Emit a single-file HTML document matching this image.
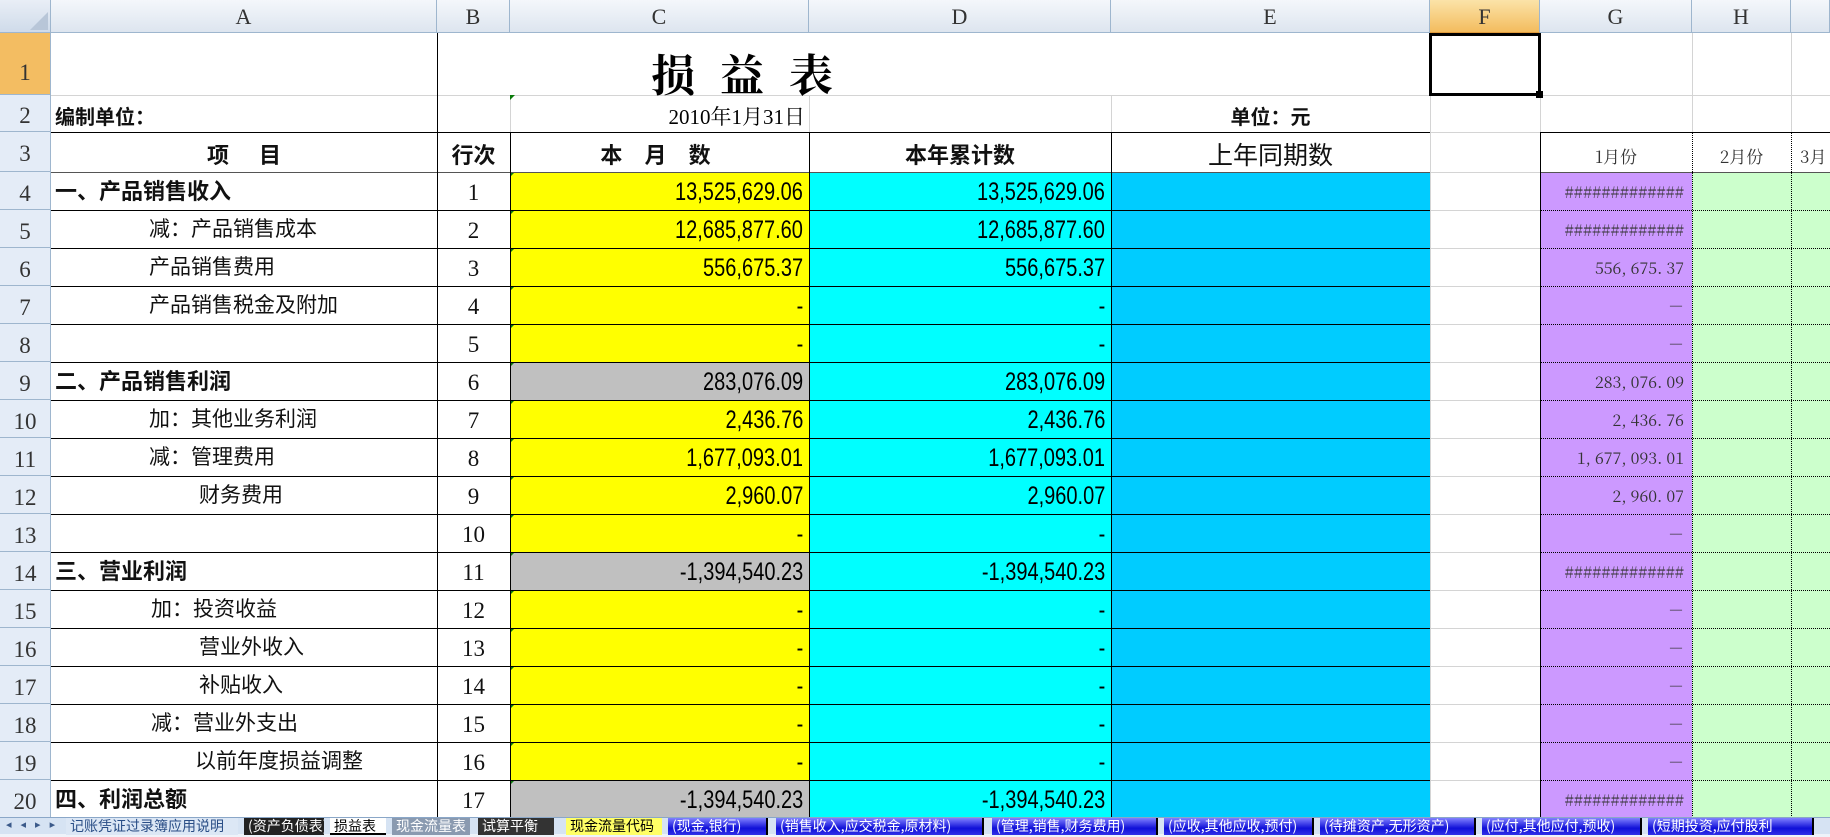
<!DOCTYPE html>
<html><head><meta charset="utf-8"><style>
*{margin:0;padding:0;box-sizing:border-box}
body{width:1830px;height:837px;overflow:hidden;background:#fff;position:relative;font-family:"Liberation Sans","Noto Sans CJK SC",sans-serif}
.a{position:absolute}
.ch{position:absolute;top:0;height:33px;background:linear-gradient(#f4f7fb,#dde5ef);border-right:1px solid #9eb6ce;border-bottom:1px solid #9eb6ce;color:#333;font:22px "Liberation Serif","Noto Serif CJK SC",serif;text-align:center;line-height:33px;transform-origin:center}
.rh{position:absolute;left:0;width:51px;background:#e4ecf7;border-bottom:1px solid #9eb6ce;border-right:1px solid #9eb6ce;color:#333;font-family:"Liberation Serif",serif;font-size:23px;text-align:center}
.c{position:absolute;height:38px;line-height:40px;white-space:nowrap;overflow:hidden}
.t{font-family:"Liberation Sans","Noto Sans CJK SC",sans-serif;font-size:20px;color:#111}
.b{font-weight:bold;font-size:21px}
.n{font-family:"Liberation Sans",sans-serif;font-size:25px;text-align:right;padding-right:6px;color:#000}
.n span{display:inline-block;transform:scaleX(.8);transform-origin:right}
.g{font-family:"Noto Serif CJK SC","Liberation Serif",serif;font-size:16px;color:#333;text-align:right;padding-right:8px}
.num{font-family:"Liberation Serif",serif;font-size:23px;text-align:center;color:#111}
.tab{position:absolute;top:818px;height:17px;font-family:"Noto Sans CJK SC",sans-serif;font-size:14px;line-height:17px;white-space:nowrap;overflow:hidden;padding:0 4px}
.bl{color:#fff;background:linear-gradient(#8080ff,#1010d8 60%,#3030e8);border-right:2px solid #000}
</style></head><body>
<div class="a" style="left:0;top:0;width:51px;height:33px;background:linear-gradient(#e9eef6,#cfdbea);border-right:1px solid #9eb6ce;border-bottom:1px solid #9eb6ce"></div>
<svg class="a" style="left:30px;top:12px" width="18" height="18"><polygon points="18,0 18,18 0,18" fill="#b8c6d8"/></svg>
<div class="ch" style="left:51px;width:386px">A</div>
<div class="ch" style="left:437px;width:73px">B</div>
<div class="ch" style="left:510px;width:299px">C</div>
<div class="ch" style="left:809px;width:302px">D</div>
<div class="ch" style="left:1111px;width:319px">E</div>
<div class="ch" style="left:1430px;width:110px;background:linear-gradient(#fbe3a8,#f3bc5e);border-bottom-color:#e09b3c">F</div>
<div class="ch" style="left:1540px;width:152px">G</div>
<div class="ch" style="left:1692px;width:99px">H</div>
<div class="ch" style="left:1791px;width:39px"></div>
<div class="rh" style="top:33px;height:62px;line-height:80px;background:#f3bd62">1</div>
<div class="rh" style="top:95px;height:37px;line-height:42px">2</div>
<div class="rh" style="top:132px;height:40px;line-height:44px">3</div>

<div class="a" style="left:51px;top:95px;width:1779px;height:1px;background:#d4d4d4"></div>
<div class="a" style="left:51px;top:132px;width:1779px;height:1px;background:#d4d4d4"></div>
<div class="a" style="left:437px;top:33px;width:1px;height:99px;background:#000"></div>
<div class="a" style="left:510px;top:95px;width:1px;height:37px;background:#d4d4d4"></div>
<div class="a" style="left:809px;top:95px;width:1px;height:37px;background:#d4d4d4"></div>
<div class="a" style="left:1111px;top:95px;width:1px;height:37px;background:#d4d4d4"></div>
<div class="a" style="left:1430px;top:33px;width:1px;height:785px;background:#d4d4d4"></div>
<div class="a" style="left:1540px;top:33px;width:1px;height:99px;background:#d4d4d4"></div>
<div class="a" style="left:1692px;top:33px;width:1px;height:99px;background:#d4d4d4"></div>
<div class="a" style="left:1791px;top:33px;width:1px;height:99px;background:#d4d4d4"></div>

<div class="a" style="left:562px;top:40px;width:360px;text-align:center;font-family:'Noto Serif CJK SC',serif;font-weight:bold;font-size:44px;letter-spacing:25px;color:#000;padding-left:25px">损益表</div>
<div class="a" style="left:1429px;top:33px;width:112px;height:63px;border:3px solid #000"></div>
<div class="a" style="left:1536px;top:91px;width:7px;height:7px;background:#000"></div>
<div class="a t b" style="left:55px;top:101px;font-size:20px">编制单位：</div>
<div class="a" style="left:510px;top:101px;width:295px;text-align:right;font-family:'Liberation Serif','Noto Serif CJK SC',serif;font-size:21px">2010年1月31日</div>
<div class="a t b" style="left:1111px;top:101px;width:319px;text-align:center;font-size:20px">单位：元</div>
<svg class="a" style="left:510px;top:95px" width="5" height="5"><polygon points="0,0 5,0 0,5" fill="#0a7a0a"/></svg>

<div class="a" style="left:51px;top:132px;width:1379px;height:1px;background:#000"></div>
<div class="a" style="left:1540px;top:132px;width:290px;height:1px;background:#000"></div>
<div class="a t b" style="left:51px;top:138px;width:386px;text-align:center;font-size:22px;letter-spacing:30px;padding-left:30px">项目</div>
<div class="a t b" style="left:437px;top:138px;width:73px;text-align:center;font-size:22px">行次</div>
<div class="a t b" style="left:510px;top:138px;width:299px;text-align:center;font-size:22px;letter-spacing:8px">本 月 数</div>
<div class="a t b" style="left:809px;top:138px;width:302px;text-align:center;font-size:22px">本年累计数</div>
<div class="a t" style="left:1111px;top:136px;width:319px;text-align:center;font-size:25px">上年同期数</div>
<div class="a" style="left:1540px;top:143px;width:152px;text-align:center;font-family:'Noto Serif CJK SC',serif;font-size:17px;color:#333">1月份</div>
<div class="a" style="left:1692px;top:143px;width:99px;text-align:center;font-family:'Noto Serif CJK SC',serif;font-size:17px;color:#333">2月份</div>
<div class="a" style="left:1800px;top:143px;font-family:'Noto Serif CJK SC',serif;font-size:17px;color:#333">3月</div>
<div class="a" style="left:1540px;top:132px;width:1px;height:40px;background:#000"></div>
<div class="a" style="left:1692px;top:132px;width:0;height:40px;border-left:1px dotted #000"></div>
<div class="a" style="left:1791px;top:132px;width:0;height:40px;border-left:1px dotted #000"></div>

<div id="body"></div>
<script>
var R=[
["一、产品销售收入",55,1,"13,525,629.06","y","13,525,629.06","#############",1],
["减：产品销售成本",149,2,"12,685,877.60","y","12,685,877.60","#############"],
["产品销售费用",149,3,"556,675.37","y","556,675.37","556, 675. 37"],
["产品销售税金及附加",149,4,"-","y","-","－"],
["",0,5,"-","y","-","－"],
["二、产品销售利润",55,6,"283,076.09","g","283,076.09","283, 076. 09",1],
["加：其他业务利润",149,7,"2,436.76","y","2,436.76","2, 436. 76"],
["减：管理费用",149,8,"1,677,093.01","y","1,677,093.01","1, 677, 093. 01"],
["财务费用",199,9,"2,960.07","y","2,960.07","2, 960. 07"],
["",0,10,"-","y","-","－"],
["三、营业利润",55,11,"-1,394,540.23","g","-1,394,540.23","#############",1],
["加：投资收益",151,12,"-","y","-","－"],
["营业外收入",199,13,"-","y","-","－"],
["补贴收入",199,14,"-","y","-","－"],
["减：营业外支出",151,15,"-","y","-","－"],
["以前年度损益调整",195,16,"-","y","-","－"],
["四、利润总额",55,17,"-1,394,540.23","g","-1,394,540.23","#############",1]];
var h="";
R.forEach(function(r,i){var t=172+i*38;
h+='<div class="rh" style="top:'+t+'px;height:38px;line-height:44px">'+(i+4)+'</div>';
h+='<div class="c t'+(r[7]?' b':'')+'" style="left:'+(r[1]||55)+'px;top:'+t+'px;font-size:'+(r[7]?22:21)+'px">'+r[0]+'</div>';
h+='<div class="c num" style="left:437px;top:'+t+'px;width:73px;line-height:42px">'+r[2]+'</div>';
h+='<div class="c n" style="left:510px;top:'+t+'px;width:299px;background:'+(r[4]=="y"?"#ffff00":"#c0c0c0")+'"><span>'+r[3]+'</span></div>';
h+='<svg class="a" style="left:510px;top:'+t+'px" width="5" height="5"><polygon points="0,0 5,0 0,5" fill="#0a7a0a"/></svg>';
h+='<div class="c n" style="left:809px;top:'+t+'px;width:302px;background:#00ffff"><span>'+r[5]+'</span></div>';
h+='<div class="c" style="left:1111px;top:'+t+'px;width:319px;background:#00ccff"></div>';
h+='<div class="c g" style="left:1540px;top:'+t+'px;width:152px;background:#cc99ff">'+r[6]+'</div>';
h+='<div class="c" style="left:1692px;top:'+t+'px;width:138px;background:#ccffcc"></div>';
h+='<div class="a" style="left:51px;top:'+t+'px;width:1379px;height:1px;background:#000"></div>';
h+='<div class="a" style="left:1430px;top:'+t+'px;width:110px;height:1px;background:#d4d4d4"></div>';
h+='<div class="a" style="left:1540px;top:'+t+'px;width:290px;height:0;border-top:1px dotted #000"></div>';
});
h+='<div class="a" style="left:51px;top:172px;width:1379px;height:1px;background:#555"></div>';
h+='<div class="a" style="left:1540px;top:172px;width:290px;height:1px;background:#555"></div>';
["437","510","809","1111"].forEach(function(x){h+='<div class="a" style="left:'+x+'px;top:132px;width:1px;height:686px;background:#000"></div>';});
h+='<div class="a" style="left:1540px;top:172px;width:1px;height:646px;background:#000"></div>';
h+='<div class="a" style="left:1692px;top:172px;height:646px;border-left:1px dotted #000"></div>';
h+='<div class="a" style="left:1791px;top:172px;height:646px;border-left:1px dotted #000"></div>';
document.getElementById("body").innerHTML=h;
</script>
<div class="a" style="left:0;top:817px;width:1830px;height:20px;background:#d6e3f3;border-top:1px solid #8aa7c8"></div>
<div class="a" style="left:0;top:834px;width:1830px;height:3px;background:#eef3fa"></div>
<div class="a" style="left:6px;top:818px;font-size:11px;color:#3b5a8a;letter-spacing:9px">◂◂▸▸</div>
<div class="tab" style="left:66px;width:172px;color:#2a4e86;background:#dce7f5">记账凭证过录簿应用说明</div>
<div class="tab" style="left:244px;width:80px;color:#fff;background:#222">(资产负债表)</div>
<div class="tab" style="left:330px;width:56px;color:#000;background:#fff;border-bottom:2px solid #000">损益表</div>
<div class="tab" style="left:392px;width:78px;color:#fff;background:#8a9ab0">现金流量表</div>
<div class="tab" style="left:478px;width:76px;color:#fff;background:#333">试算平衡</div>
<div class="tab" style="left:566px;width:96px;color:#000;background:#ffff66">现金流量代码</div>
<div class="tab bl" style="left:668px;width:100px">(现金,银行)</div>
<div class="tab bl" style="left:776px;width:208px">(销售收入,应交税金,原材料)</div>
<div class="tab bl" style="left:992px;width:166px">(管理,销售,财务费用)</div>
<div class="tab bl" style="left:1164px;width:150px">(应收,其他应收,预付)</div>
<div class="tab bl" style="left:1320px;width:156px">(待摊资产,无形资产)</div>
<div class="tab bl" style="left:1482px;width:160px">(应付,其他应付,预收)</div>
<div class="tab bl" style="left:1648px;width:166px">(短期投资,应付股利</div>
</body></html>
